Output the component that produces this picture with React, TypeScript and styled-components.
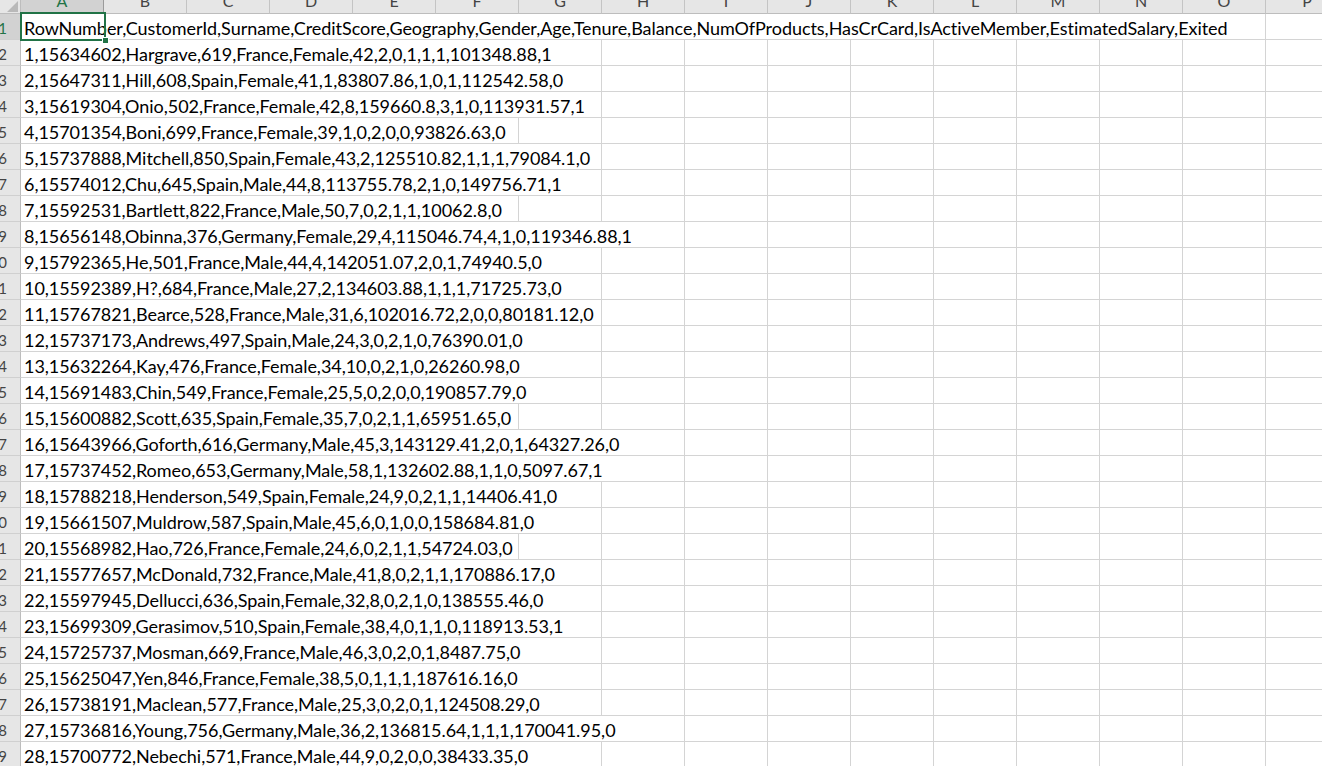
import React from 'react';
import styled, { createGlobalStyle } from 'styled-components';

const GlobalStyle = createGlobalStyle`
  html, body {
    margin: 0;
    padding: 0;
    background: #ffffff;
    overflow: hidden;
  }
`;

const COLS = ['A', 'B', 'C', 'D', 'E', 'F', 'G', 'H', 'I', 'J', 'K', 'L', 'M', 'N', 'O', 'P'];
const GRID = `21px repeat(${COLS.length}, 83px)`;

const rows: { text: string; span: number }[] = [
  { text: 'RowNumber,CustomerId,Surname,CreditScore,Geography,Gender,Age,Tenure,Balance,NumOfProducts,HasCrCard,IsActiveMember,EstimatedSalary,Exited', span: 15 },
  { text: '1,15634602,Hargrave,619,France,Female,42,2,0,1,1,1,101348.88,1', span: 7 },
  { text: '2,15647311,Hill,608,Spain,Female,41,1,83807.86,1,0,1,112542.58,0', span: 7 },
  { text: '3,15619304,Onio,502,France,Female,42,8,159660.8,3,1,0,113931.57,1', span: 7 },
  { text: '4,15701354,Boni,699,France,Female,39,1,0,2,0,0,93826.63,0', span: 6 },
  { text: '5,15737888,Mitchell,850,Spain,Female,43,2,125510.82,1,1,1,79084.1,0', span: 7 },
  { text: '6,15574012,Chu,645,Spain,Male,44,8,113755.78,2,1,0,149756.71,1', span: 7 },
  { text: '7,15592531,Bartlett,822,France,Male,50,7,0,2,1,1,10062.8,0', span: 6 },
  { text: '8,15656148,Obinna,376,Germany,Female,29,4,115046.74,4,1,0,119346.88,1', span: 8 },
  { text: '9,15792365,He,501,France,Male,44,4,142051.07,2,0,1,74940.5,0', span: 7 },
  { text: '10,15592389,H?,684,France,Male,27,2,134603.88,1,1,1,71725.73,0', span: 7 },
  { text: '11,15767821,Bearce,528,France,Male,31,6,102016.72,2,0,0,80181.12,0', span: 7 },
  { text: '12,15737173,Andrews,497,Spain,Male,24,3,0,2,1,0,76390.01,0', span: 7 },
  { text: '13,15632264,Kay,476,France,Female,34,10,0,2,1,0,26260.98,0', span: 7 },
  { text: '14,15691483,Chin,549,France,Female,25,5,0,2,0,0,190857.79,0', span: 7 },
  { text: '15,15600882,Scott,635,Spain,Female,35,7,0,2,1,1,65951.65,0', span: 6 },
  { text: '16,15643966,Goforth,616,Germany,Male,45,3,143129.41,2,0,1,64327.26,0', span: 8 },
  { text: '17,15737452,Romeo,653,Germany,Male,58,1,132602.88,1,1,0,5097.67,1', span: 8 },
  { text: '18,15788218,Henderson,549,Spain,Female,24,9,0,2,1,1,14406.41,0', span: 7 },
  { text: '19,15661507,Muldrow,587,Spain,Male,45,6,0,1,0,0,158684.81,0', span: 7 },
  { text: '20,15568982,Hao,726,France,Female,24,6,0,2,1,1,54724.03,0', span: 6 },
  { text: '21,15577657,McDonald,732,France,Male,41,8,0,2,1,1,170886.17,0', span: 7 },
  { text: '22,15597945,Dellucci,636,Spain,Female,32,8,0,2,1,0,138555.46,0', span: 7 },
  { text: '23,15699309,Gerasimov,510,Spain,Female,38,4,0,1,1,0,118913.53,1', span: 7 },
  { text: '24,15725737,Mosman,669,France,Male,46,3,0,2,0,1,8487.75,0', span: 7 },
  { text: '25,15625047,Yen,846,France,Female,38,5,0,1,1,1,187616.16,0', span: 7 },
  { text: '26,15738191,Maclean,577,France,Male,25,3,0,2,0,1,124508.29,0', span: 7 },
  { text: '27,15736816,Young,756,Germany,Male,36,2,136815.64,1,1,1,170041.95,0', span: 8 },
  { text: '28,15700772,Nebechi,571,France,Male,44,9,0,2,0,0,38433.35,0', span: 7 },
];

const Sheet = styled.div`
  position: relative;
  width: 1322px;
  height: 766px;
  overflow: hidden;
  font-family: Lato, 'Open Sans', sans-serif;
`;

const HeaderRow = styled.div`
  display: grid;
  grid-template-columns: ${GRID};
  height: 14px;
  background: #e6e6e6;
`;

const Corner = styled.div`
  box-sizing: border-box;
  height: 14px;
  border-right: 1px solid #bdbdbd;
  border-bottom: 1px solid #bdbdbd;
  background: #e6e6e6;
  svg {
    display: block;
  }
`;

const ColHeader = styled.div<{ $active?: boolean }>`
  box-sizing: border-box;
  height: 14px;
  overflow: hidden;
  text-align: center;
  font-size: 16px;
  line-height: 16px;
  color: ${(p) => (p.$active ? '#217346' : '#444444')};
  background: ${(p) => (p.$active ? '#d2d2d2' : '#e6e6e6')};
  border-right: 1px solid ${(p) => (p.$active ? '#9b9b9b' : '#c4c4c4')};
  border-bottom: ${(p) => (p.$active ? '2px solid #217346' : '1px solid #bdbdbd')};

  span {
    display: block;
    margin-top: -7px;
  }
`;

const Row = styled.div`
  display: grid;
  grid-template-columns: ${GRID};
  height: 26px;
`;

const RowHeader = styled.div<{ $active?: boolean }>`
  box-sizing: border-box;
  height: 26px;
  overflow: hidden;
  white-space: nowrap;
  text-align: right;
  padding-right: 13px;
  font-size: 15px;
  line-height: 24px;
  padding-top: 2px;
  color: ${(p) => (p.$active ? '#217346' : '#444444')};
  background: ${(p) => (p.$active ? '#d2d2d2' : '#e6e6e6')};
  border-right: 1px solid #bdbdbd;
  border-bottom: 1px solid #d0d0d0;
  direction: rtl;
`;

const TextCell = styled.div<{ $span: number }>`
  grid-column: span ${(p) => p.$span};
  box-sizing: border-box;
  height: 26px;
  padding: 3px 0 0 3px;
  font-size: 18px;
  line-height: 22px;
  letter-spacing: -0.05px;
  color: #000000;
  white-space: nowrap;
  border-right: 1px solid #d4d4d4;
  border-bottom: 1px solid #d4d4d4;
`;

const EmptyCell = styled.div`
  box-sizing: border-box;
  height: 26px;
  border-right: 1px solid #d4d4d4;
  border-bottom: 1px solid #d4d4d4;
`;

const Selection = styled.div`
  position: absolute;
  left: 20px;
  top: 12px;
  width: 86px;
  height: 29px;
  box-sizing: border-box;
  border: 2px solid #217346;
  pointer-events: none;
`;

const FillHandle = styled.div`
  position: absolute;
  right: -5px;
  bottom: -5px;
  width: 5px;
  height: 5px;
  background: #217346;
  border: 1px solid #ffffff;
`;

export default function App() {
  return (
    <>
      <GlobalStyle />
      <Sheet>
        <HeaderRow>
          <Corner>
            <svg width="20" height="13" viewBox="0 0 20 13">
              <polygon points="7,12 18,12 18,1" fill="#b9b9b9" />
            </svg>
          </Corner>
          {COLS.map((c, i) => (
            <ColHeader key={c} $active={i === 0}>
              <span>{c}</span>
            </ColHeader>
          ))}
        </HeaderRow>
        {rows.map((r, i) => (
          <Row key={i}>
            <RowHeader $active={i === 0}>
              <bdi>{i + 1}</bdi>
            </RowHeader>
            <TextCell $span={r.span}>{r.text}</TextCell>
            {Array.from({ length: COLS.length - r.span }).map((_, j) => (
              <EmptyCell key={j} />
            ))}
          </Row>
        ))}
        <Selection>
          <FillHandle />
        </Selection>
      </Sheet>
    </>
  );
}
